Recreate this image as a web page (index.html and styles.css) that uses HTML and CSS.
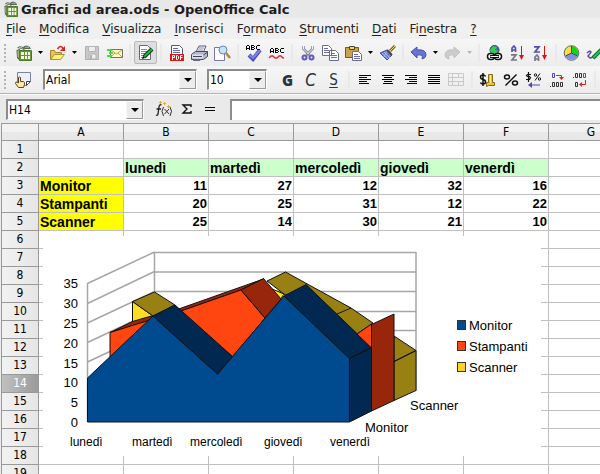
FILE: index.html
```html
<!DOCTYPE html>
<html lang="it">
<head>
<meta charset="utf-8">
<title>Grafici ad area.ods - OpenOffice Calc</title>
<link rel="stylesheet" href="styles.css">
</head>
<body>
<svg class="defs" aria-hidden="true">
  <symbol id="sheet" viewBox="0 0 16 16">
    <path d="M1 3Q3 0 7 2q3-3 7 0l1 2H9L8 5 6 4z" fill="#5d6a64"/>
    <path d="M3 2.500q2-1 4 1M9 2.500q2-1 4 0" fill="none" stroke="#b4beb8"/>
    <path d="M.5 5L4 4v12l-3-3z" fill="#4f6a3c"/>
    <path d="M1.500 6L3 5v8l-1.500-1z" fill="#9db48a"/>
    <path d="M3.500 5.500h12v10h-12z" fill="#62962e" stroke="#4c7a22"/>
    <path d="M5 7h9v7H5z" fill="#f6ffe4"/>
    <path d="M8 7h1v7H8zM11 7h1v7h-1zM5 10h9v1H5z" fill="#62962e"/>
  </symbol>
  <symbol id="drop" viewBox="0 0 5 3"><path d="M0 0h5L2.500 3z" fill="currentColor"/></symbol>
</svg>

<header class="titlebar">
  <svg width="14" height="16" viewBox="0 0 16 16" preserveAspectRatio="none"><use href="#sheet"/></svg>
  <h1>Grafici ad area.ods - OpenOffice Calc</h1>
</header>

<nav class="menubar">
  <button><u>F</u>ile</button><button><u>M</u>odifica</button><button><u>V</u>isualizza</button><button><u>I</u>nserisci</button><button>F<u>o</u>rmato</button><button><u>S</u>trumenti</button><button><u>D</u>ati</button><button>Fi<u>n</u>estra</button><button><u>?</u></button>
</nav>

<div class="toolbar" role="toolbar" aria-label="Standard">
  <span class="grip"></span>
  <button class="tool" aria-label="Nuovo"><svg width="16" height="16"><use href="#sheet"/></svg></button>
  <button class="more" aria-label="Altri documenti"><svg width="5" height="3"><use href="#drop"/></svg></button>
  <button class="tool" aria-label="Apri"><svg width="17" height="16"><path d="M1.500 14.500v-9h4l1 2h6v2" fill="#e8c060" stroke="#a8822a"/><path d="M1.500 14.500l4-5h10l-4 5z" fill="#fff080" stroke="#a89430"/><path d="M8.500 4q3-5 6 0" fill="none" stroke="#e02020" stroke-width="1.500"/><path d="M16 1v5h-5z" fill="#e02020"/></svg></button>
  <button class="more" aria-label="File recenti"><svg width="5" height="3"><use href="#drop"/></svg></button>
  <button class="tool" aria-label="Salva"><svg width="16" height="16"><path d="M1.500 1.500h13v13h-13z" fill="#c8c8c8" stroke="#b0b0b0"/><path d="M4.500 1.500h7v5h-7zM5 9h7v5H5z" fill="#eee" stroke="#b4b4b4"/><path d="M6 10h2v4H6z" fill="#b0b0b0"/></svg></button>
  <button class="tool" aria-label="Invia per posta"><svg width="17" height="16"><path d="M4.500 4.500h12v8h-12z" fill="#fff8c0" stroke="#77745a"/><path d="M5 5l5.500 4L16 5M5 12l4-4M16 12l-4-4" fill="none" stroke="#b0a868"/><path d="M1 4h4v2H1zM3 7h4v2H3zM1 10h5v2H1z" fill="#3fe03f"/></svg></button>
  <span class="sep"></span>
  <button class="tool pressed" aria-label="Modifica file" aria-pressed="true"><svg width="16" height="16"><path d="M1.500.5h8l3 3v11h-11z" fill="#fff" stroke="#667"/><path d="M3 4.500h6M3 6.500h6M3 8.500h4M3 10.500h3M3 12.500h2" stroke="#889"/><path d="M6 12L14 4" stroke="#042" stroke-width="4"/><path d="M6.500 11.500L14 4" stroke="#1fb82c" stroke-width="2"/><path d="M4 14l1-3 2 2z" fill="#000"/></svg></button>
  <span class="sep"></span>
  <button class="tool" aria-label="Esporta PDF"><svg width="16" height="16"><path d="M2.500.5h8l3 3v8h-11z" fill="#fff" stroke="#557"/><path d="M4 3.500h5M4 5.500h7M4 7.500h7" stroke="#66a"/><path d="M1 9h14v7H1z" fill="#e01818"/><path d="M3.500 15v-4.500h2v2h-2M7.500 10.500v4h1l1-1v-2l-1-1zM11.500 15v-4.500h2M11.500 12.500h2" fill="none" stroke="#fff"/></svg></button>
  <button class="tool" aria-label="Stampa"><svg width="17" height="16"><path d="M5 7l3-6h7l-3 7z" fill="#fff" stroke="#557"/><path d="M8 3h5M7 5h5" stroke="#88a"/><path d="M.5 9.500l4-3h12v5l-4 3H.5z" fill="#b4b8c8" stroke="#444a60"/><path d="M1 9.500h11v4H1z" fill="#dde0e8"/><path d="M2 11.500h9M12.500 10l4-3" stroke="#445"/><path d="M3 14h7l-1 2H2z" fill="#668"/></svg></button>
  <button class="tool" aria-label="Anteprima"><svg width="17" height="16"><path d="M.5 2.500h10v13H.5z" fill="#fff" stroke="#77a"/><circle cx="9" cy="5" r="4" fill="#c6e2f8" stroke="#6a86b4"/><path d="M12 8l4 5" stroke="#b08848" stroke-width="2.500"/></svg></button>
  <span class="sep"></span>
  <button class="tool" aria-label="Controllo ortografico"><svg width="17" height="18"><path d="M4 11l4 4 7-9" fill="none" stroke="#4b4bbb" stroke-width="4"/><path d="M4 11l4 3 7-8" fill="none" stroke="#8080ee" stroke-width="2"/><path class="px" d="M1 2h1v4H1zM2 1h2v1H2zM4 2h1v4H4zM2 4h2v1H2zM6 1h3v1H6zM6 3h3v1H6zM6 5h3v1H6zM6 1h1v5H6zM9 2h1v1H9zM9 4h1v1H9zM12 1h3v1h-3zM11 2h1v3h-1zM12 5h3v1h-3z"/></svg></button>
  <button class="tool" aria-label="Controllo automatico"><svg width="17" height="16"><path class="px" d="M2 4h1v4H2zM3 3h2v1H3zM5 4h1v4H5zM3 6h2v1H3zM7 3h3v1H7zM7 5h3v1H7zM7 7h3v1H7zM7 3h1v5H7zM10 4h1v1h-1zM10 6h1v1h-1zM13 3h3v1h-3zM12 4h1v3h-1zM13 7h3v1h-3z"/><path d="M1 13l2-2h2l2 2h2l2-2h2l2 2h1" fill="none" stroke="#e22" stroke-width="1.300"/></svg></button>
  <span class="sep"></span>
  <button class="tool" aria-label="Taglia"><svg width="16" height="16"><path d="M3.500 1v3l6 6M12.500 1v3l-6 6" fill="none" stroke="#84849a" stroke-width="2.500"/><path d="M3.500 1v3l5 5M12.500 1v3l-5 5" fill="none" stroke="#f4f4f8"/><circle cx="4.500" cy="12.500" r="2" fill="none" stroke="#6058c0" stroke-width="2"/><circle cx="11.500" cy="12.500" r="2" fill="none" stroke="#6058c0" stroke-width="2"/></svg></button>
  <button class="tool" aria-label="Copia"><svg width="17" height="16"><path d="M.5.5h6l3 3v7h-9zM7.500 5.500h6l3 3v7h-9z" fill="#fff" stroke="#66708e"/><path d="M2 3.500h4M2 5.500h5M2 7.500h5M9 8.500h4M9 10.500h6M9 12.500h6" stroke="#6a6ab8"/></svg></button>
  <button class="tool" aria-label="Incolla"><svg width="17" height="16"><path d="M.5 2.500h13v10H.5z" fill="#caa24a" stroke="#76561c"/><path d="M4.500 1.500h5v3h-5z" fill="#f4e03c" stroke="#443"/><path d="M7.500 6.500h6l3 3v6h-9z" fill="#fff" stroke="#66708e"/><path d="M9 9.500h4M9 11.500h6M9 13.500h6" stroke="#6a6ab8"/></svg></button>
  <button class="more" aria-label="Incolla speciale"><svg width="5" height="3"><use href="#drop"/></svg></button>
  <button class="tool" aria-label="Pennello"><svg width="17" height="16"><path d="M11 6l5-5" stroke="#7a6228" stroke-width="3"/><path d="M11 6l5-5" stroke="#f0d878"/><path d="M1 8l7-3 5 5-5 5z" fill="#6c7ed8" stroke="#4450a0"/><path d="M3 8l6 6M5 7l6 6M8 6l-3 6" stroke="#a8b4f4"/><path d="M8 5l5 5" stroke="#444" stroke-width="2"/></svg></button>
  <span class="sep"></span>
  <button class="tool" aria-label="Annulla"><svg width="17" height="16"><path d="M1 7l6-5v3q9-1 9 5 0 3-4 4 2-5-5-4v3z" fill="#6474d8" stroke="#4650a8"/></svg></button>
  <button class="more" aria-label="Elenco annulla"><svg width="5" height="3"><use href="#drop"/></svg></button>
  <button class="tool" aria-label="Ripristina" disabled><svg width="17" height="16"><path d="M16 7l-6-5v3q-9-1-9 5 0 3 4 4-2-5 5-4v3z" fill="#ccc" stroke="#c0c0c0"/></svg></button>
  <button class="more" aria-label="Elenco ripristina" disabled><svg width="5" height="3"><use href="#drop"/></svg></button>
  <span class="sep"></span>
  <button class="tool" aria-label="Collegamento"><svg width="17" height="16"><circle cx="8.500" cy="5" r="4.500" fill="#4468c0" stroke="#345"/><path d="M4 5l3-4 4 1-2 3 3 1-2 3-5-1z" fill="#2fd04a"/><rect x="1.500" y="8.500" width="7" height="6" rx="3" fill="#fff" stroke="#111" stroke-width="1.500"/><rect x="8.500" y="8.500" width="7" height="6" rx="3" fill="#fff" stroke="#111" stroke-width="1.500"/><path d="M4 11.500h9" stroke="#111" stroke-width="3"/><path d="M4.500 11.500h8" stroke="#fff"/></svg></button>
  <button class="tool" aria-label="Ordine crescente"><svg width="16" height="16"><path d="M2 7V3l2-2 1.500 2v4M2 5h3.500" fill="none" stroke="#5050b4" stroke-width="1.700"/><path d="M1 9.800h5L2 15h5" fill="none" stroke="#778" stroke-width="1.700"/><path d="M11 1h1v9h-1z" fill="#e01010"/><path d="M9 10h5l-2.500 5z" fill="#e01010"/></svg></button>
  <button class="tool" aria-label="Ordine decrescente"><svg width="16" height="16"><path d="M1 1.800h5L2 7h5" fill="none" stroke="#5050b4" stroke-width="1.700"/><path d="M2 16v-4l2-2 1.500 2v4M2 14h3.500" fill="none" stroke="#778" stroke-width="1.700"/><path d="M11 1h1v9h-1z" fill="#e01010"/><path d="M9 10h5l-2.500 5z" fill="#e01010"/></svg></button>
  <span class="sep"></span>
  <button class="tool" aria-label="Grafico"><svg width="17" height="16"><circle cx="8.500" cy="8" r="7.300" fill="#ffdf38" stroke="#667"/><path d="M8.500 8V1a7 7 0 0 1 6 10z" fill="#0fd818"/><path d="M8.500 8l6 3a7 7 0 0 1-12 0z" fill="#7c90f4"/><path d="M8.500 1v7l6 3M8.500 8l-6 3" fill="none" stroke="#445"/></svg></button>
  <button class="tool" aria-label="Disegno"><svg width="17" height="16"><path d="M1 8q3-3 4-1-1 2-3 4l2 2q2 0 4-2" fill="none" stroke="#6044b0" stroke-width="1.500"/><path d="M7 13l9-9" stroke="#063" stroke-width="4"/><path d="M7.500 12.500l9-9" stroke="#2c3" stroke-width="2"/></svg></button>
</div>

<div class="toolbar" role="toolbar" aria-label="Formattazione">
  <span class="grip"></span>
  <button class="tool" aria-label="Stili"><svg width="17" height="16"><path d="M2.500.5h13v9l-4 4h-9z" fill="#eceff8" stroke="#7c8498"/><path d="M11.500 13.500v-4h4z" fill="#fff" stroke="#445"/><path d="M3.500 5.500q1.500-1 2 0v4h3q1.500 1 1 3l-1 3h-5l-3-4q0-2 1.500-1.500l1.500 1z" fill="#ffe8a8" stroke="#5c4420"/></svg></button>
  <label class="combo font"><select aria-label="Tipo di carattere"><option>Arial</option></select><span class="arrow"><svg width="8" height="4" viewBox="0 0 5 3" preserveAspectRatio="none"><path d="M0 0h5L2.500 3z"/></svg></span></label>
  <label class="combo size"><select aria-label="Dimensione"><option>10</option></select><span class="arrow"><svg width="8" height="4" viewBox="0 0 5 3" preserveAspectRatio="none"><path d="M0 0h5L2.500 3z"/></svg></span></label>
  <button class="tool letter bold">G</button>
  <button class="tool letter italic">C</button>
  <button class="tool letter under">S</button>
  <span class="sep"></span>
  <button class="tool" aria-label="Sinistra"><svg class="px" width="12" height="10"><path d="M0 0h12v1H0zM0 2h8v1H0zM0 4h12v1H0zM0 6h8v1H0zM0 8h10v1H0z"/></svg></button>
  <button class="tool" aria-label="Centrato"><svg class="px" width="12" height="10"><path d="M0 0h12v1H0zM2 2h8v1H2zM0 4h12v1H0zM2 6h8v1H2zM1 8h10v1H1z"/></svg></button>
  <button class="tool" aria-label="Destra"><svg class="px" width="12" height="10"><path d="M0 0h12v1H0zM4 2h8v1H4zM0 4h12v1H0zM4 6h8v1H4zM2 8h10v1H2z"/></svg></button>
  <button class="tool" aria-label="Giustificato"><svg class="px" width="12" height="10"><path d="M0 0h12v1H0zM0 2h12v1H0zM0 4h12v1H0zM0 6h12v1H0zM0 8h12v1H0z"/></svg></button>
  <button class="tool" aria-label="Unisci celle" disabled><svg width="17" height="14"><path d="M.5.5h15v12H.5zM.5 4.500h15M.5 8.500h15M4.500.5v12M10.500.5v4M10.500 8.500v4" fill="none" stroke="#c8c8c8"/></svg></button>
  <span class="sep"></span>
  <button class="tool" aria-label="Valuta"><svg width="17" height="16"><path d="M6.500 4.500Q6 3 4 3 1.500 3 1.500 5T4 7.500t2.500 2.500T4 12q-2 0-2.500-1.500M4 1v13" fill="none" stroke="#111" stroke-width="1.500"/><path d="M9.500 2.500h4v8h2v3h-6l-2 1v-4h2z" fill="#f0c030" stroke="#8a6a18"/><path d="M11.500 3v8" stroke="#fff080"/></svg></button>
  <button class="tool" aria-label="Percentuale"><svg width="16" height="14"><ellipse cx="4" cy="4" rx="2.500" ry="2" fill="none" stroke="#111" stroke-width="1.500"/><ellipse cx="12" cy="10" rx="2.500" ry="2" fill="none" stroke="#111" stroke-width="1.500"/><path d="M2.500 12.500l11-11" stroke="#111" stroke-width="1.500"/></svg></button>
  <button class="tool" aria-label="Formato standard"><svg width="17" height="16"><path d="M6 2.500H2.500L1.500 3.500 2.500 4.500h2l1 1-1 2H1M3.500 0v10" fill="none" stroke="#111" stroke-width="1.200"/><circle cx="10.500" cy="3" r="1.200" fill="none" stroke="#111"/><circle cx="14.500" cy="7" r="1.200" fill="none" stroke="#111"/><path d="M10 8.500l5-7" stroke="#111"/><path d="M5 13h10" stroke="#5048c0"/><path d="M3 13l4-3v6z" fill="#5048c0"/></svg></button>
  <button class="tool" aria-label="Aggiungi decimale"><svg width="16" height="16"><path d="M3.500 1.500h2v4h-2z" fill="none" stroke="#5048c0"/><path d="M7 3.500h5.500v3" fill="none" stroke="#d22"/><path d="M10 5h5l-2.500 3z" fill="#d22"/><path d="M3.500 10.500h2v4h-2zM7.500 10.500h2v4h-2zM11.500 10.500h2v4h-2zM1 14.500h1" fill="none" stroke="#333"/></svg></button>
  <button class="tool" aria-label="Elimina decimale"><svg width="16" height="16"><path d="M3.500 1.500h2v4h-2zM7.500 1.500h2v4h-2zM1 5.500h1" fill="none" stroke="#333"/><path d="M11.500 1.500h2v4h-2z" fill="none" stroke="#5048c0"/><path d="M3.500 10.500h2v4h-2z" fill="none" stroke="#333"/><path d="M13.500 8v4.500H9" fill="none" stroke="#d22"/><path d="M7 12.500l3-2.500v5z" fill="#d22"/></svg></button>
  <span class="sep"></span>
</div>

<div class="formulabar">
  <div class="combo name"><input type="text" value="H14" aria-label="Casella del nome"><button class="arrow" aria-label="Elenco nomi"><svg width="8" height="4" viewBox="0 0 5 3" preserveAspectRatio="none"><path d="M0 0h5L2.500 3z"/></svg></button></div>
  <button class="tool" aria-label="Creazione guidata funzione"><svg width="18" height="18"><path d="M6.500 5Q4.500 4 4 7L3 14q-.5 2-2 1M1.500 9h4.500" fill="none" stroke="#222" stroke-width="1.300"/><path d="M8.500 7q-3 4 0 9M15 7q3 4 0 9M9.500 9l4.500 5M14 9l-4.500 5" fill="none" stroke="#333"/><path d="M4 2h3v1H4zM5 1h1v3H5zM8 3h3v1H8zM9 2h1v3H9zM12 6h3v1h-3zM13 5h1v3h-1z" fill="#f5a81c"/></svg></button>
  <button class="tool" aria-label="Somma"><svg width="12" height="12"><path d="M10 4V2H2l4 4-4 4h8V8" fill="none" stroke="#111" stroke-width="1.400"/></svg></button>
  <button class="tool" aria-label="Funzione"><svg class="px" width="10" height="6"><path d="M0 1h10v1H0zM0 4h10v1H0z"/></svg></button>
  <input class="formula" type="text" aria-label="Riga di immissione">
</div>

<main class="sheet">
  <table>
    <colgroup><col class="rowhead"><col><col><col><col><col><col><col></colgroup>
    <thead><tr><th></th><th>A</th><th>B</th><th>C</th><th>D</th><th>E</th><th>F</th><th>G</th></tr></thead>
    <tbody>
      <tr><th>1</th><td></td><td></td><td></td><td></td><td></td><td></td><td></td></tr>
      <tr><th>2</th><td></td><td class="day">lunedì</td><td class="day">martedì</td><td class="day">mercoledì</td><td class="day">giovedì</td><td class="day">venerdì</td><td></td></tr>
      <tr><th>3</th><td class="item">Monitor</td><td>11</td><td>27</td><td>12</td><td>32</td><td>16</td><td></td></tr>
      <tr><th>4</th><td class="item">Stampanti</td><td>20</td><td>25</td><td>31</td><td>12</td><td>22</td><td></td></tr>
      <tr><th>5</th><td class="item">Scanner</td><td>25</td><td>14</td><td>30</td><td>21</td><td>10</td><td></td></tr>
      <tr><th>6</th><td></td><td></td><td></td><td></td><td></td><td></td><td></td></tr>
      <tr><th>7</th><td></td><td></td><td></td><td></td><td></td><td></td><td></td></tr>
      <tr><th>8</th><td></td><td></td><td></td><td></td><td></td><td></td><td></td></tr>
      <tr><th>9</th><td></td><td></td><td></td><td></td><td></td><td></td><td></td></tr>
      <tr><th>10</th><td></td><td></td><td></td><td></td><td></td><td></td><td></td></tr>
      <tr><th>11</th><td></td><td></td><td></td><td></td><td></td><td></td><td></td></tr>
      <tr><th>12</th><td></td><td></td><td></td><td></td><td></td><td></td><td></td></tr>
      <tr><th>13</th><td></td><td></td><td></td><td></td><td></td><td></td><td></td></tr>
      <tr><th class="current">14</th><td></td><td></td><td></td><td></td><td></td><td></td><td></td></tr>
      <tr><th>15</th><td></td><td></td><td></td><td></td><td></td><td></td><td></td></tr>
      <tr><th>16</th><td></td><td></td><td></td><td></td><td></td><td></td><td></td></tr>
      <tr><th>17</th><td></td><td></td><td></td><td></td><td></td><td></td><td></td></tr>
      <tr><th>18</th><td></td><td></td><td></td><td></td><td></td><td></td><td></td></tr>
      <tr><th>19</th><td></td><td></td><td></td><td></td><td></td><td></td><td></td></tr>
    </tbody>
  </table>
  <svg class="chart" width="498" height="220" viewBox="43 236 498 220" role="img" aria-label="Grafico ad area 3D">
    <g class="walls">
      <path d="M87.500 283.500l67-31.500M87.500 303.500l67-32M87.500 323l67-31.500M87.500 342.500l67-31.500M87.500 362l67-31.500M87.500 283v139"/>
      <path d="M154.500 252.500H416M154.500 272H416M154.500 291.500H416M154.500 311.500H416M154.500 330.500H416M154.500 252v80M416 252v139"/>
    </g>
    <g class="solids">
      <path class="olive" d="M284 294L267 281l18.500-9L351 308l22 15-16 11z"/>
      <path class="olive" d="M351 308l-14 6"/>
      <path class="olive" d="M394 336l22 14.500-22 11zM394 361.500l22-11V390.500l-22 10z"/>
      <path class="yellow" d="M272 289l12 5-4 6z"/>
      <path class="yellow" d="M132.500 301.500L153 316l-20.500 7z"/>
      <path class="red" d="M110 332.500l22.500-11L153 315.500l27-7 83.500-29.500-22.500 11-60 21-36 11z"/>
      <path class="orange" d="M110 332.500l35-11 36-10.500 60-21 24 28-32 39-58-46-65 50z"/>
      <path class="red" d="M241 290l22.500-11.500L281 299l-16 19z"/>
      <path class="olive" d="M132.500 301.500L154.500 292l20.500 13-22 11z"/>
      <path class="blue" d="M87.500 378L153 316l64.500 58L284 296l65.500 62.500V422h-262z"/>
      <path class="navy" d="M153 316l22-11 57.500 51.500-15 17.500zM284 296l22-11.500 65.500 63-22 11zM349.500 358.500l22-11V411l-22 11z"/>
      <path class="orange" d="M357 334l14.500-10v24z"/>
      <path class="red" d="M371.500 324.500l22.500-10.500V400.500L371.500 411z"/>
    </g>
    <g class="key">
      <rect class="blue" x="457.500" y="320.500" width="8" height="9"/>
      <rect class="orange" x="457.500" y="341.500" width="8" height="9"/>
      <rect class="bright" x="457.500" y="362.500" width="8" height="9"/>
    </g>
    <g class="scale">
      <text x="78" y="288">35</text><text x="78" y="308">30</text><text x="78" y="328">25</text><text x="78" y="348">20</text><text x="78" y="368">15</text><text x="78" y="387">10</text><text x="78" y="407">5</text><text x="78" y="427">0</text>
    </g>
    <g class="days">
      <text x="70" y="446">lunedì</text><text x="132" y="446">martedì</text><text x="190" y="446">mercoledì</text><text x="264" y="446">giovedì</text><text x="330" y="446">venerdì</text>
    </g>
    <g class="names">
      <text x="365" y="432">Monitor</text><text x="410" y="410">Scanner</text>
      <text x="469" y="330">Monitor</text><text x="469" y="351">Stampanti</text><text x="469" y="372">Scanner</text>
    </g>
  </svg>
</main>
</body>
</html>
```
FILE: styles.css
```css
* { box-sizing: border-box; }

body {
  display: flex;
  flex-direction: column;
  height: 100vh;
  margin: 0;
  overflow: hidden;
  background: #ececec;
  color: #000;
  font: 12px "DejaVu Sans Condensed", "DejaVu Sans", sans-serif;
}

button, input, select {
  margin: 0;
  padding: 0;
  border: 0;
  background: none;
  color: inherit;
  font: inherit;
}

svg { display: block; flex: none; }
.px { shape-rendering: crispEdges; }
.defs { position: absolute; width: 0; height: 0; }

.titlebar {
  display: flex;
  align-items: center;
  flex: none;
  gap: 3px;
  height: 18px;
  padding-left: 4px;
  background: #e8e8e8;
}
.titlebar h1 {
  margin: 0;
  font: bold 13px "DejaVu Sans", sans-serif;
  color: #1c1c1c;
  white-space: nowrap;
}

.menubar {
  display: flex;
  align-items: center;
  flex: none;
  gap: 13px;
  height: 21px;
  padding-left: 6px;
  background: #f0f0f0;
  font: 12px "DejaVu Sans", sans-serif;
  color: #222;
}
.menubar u { text-underline-offset: 2px; }

.toolbar {
  display: flex;
  align-items: center;
  flex: none;
  height: 27px;
  padding-left: 4px;
  background: linear-gradient(#f6f6f6, #ececec);
}
.toolbar + .toolbar {
  height: 28px;
  border-bottom: 1px solid #b4b4b4;
}
.grip {
  flex: none;
  width: 2px;
  height: 18px;
  margin-right: 6px;
  background: repeating-linear-gradient(#b4b4b4 0 2px, transparent 2px 4px);
}
.tool, .more {
  display: flex;
  align-items: center;
  justify-content: center;
  flex: none;
  width: 23px;
  height: 23px;
}
.more { width: 11px; }
.more:disabled { color: #b8b8b8; }
.pressed {
  border: 1px solid #b8b8b8;
  border-radius: 2px;
  background: #dedede;
}
.sep {
  flex: none;
  width: 2px;
  height: 18px;
  margin: 0 3px;
  background: #e9e9e9;
}

.letter { font-size: 15px; color: #2a3340; }
.bold { font-family: "Open Sans", sans-serif; font-weight: 800; }
.italic { font-size: 17px; font-style: italic; }
.under { text-decoration: underline; text-underline-offset: 2px; }

.combo {
  display: flex;
  flex: none;
  height: 21px;
  border: 1px solid #fff;
  border-top: 2px solid #8c8c8c;
  border-left: 2px solid #8c8c8c;
  background: #fff;
}
.combo select, .combo input {
  appearance: none;
  flex: 1;
  min-width: 0;
  padding-left: 1px;
  outline: 0;
}
.arrow {
  display: flex;
  align-items: center;
  justify-content: center;
  flex: none;
  width: 17px;
  border: 1px solid #f8f8f8;
  border-right-color: #999;
  border-bottom-color: #999;
  background: #ececec;
  pointer-events: none;
}
.font { width: 154px; margin-left: 8px; }
.size { width: 60px; margin: 0 9px 0 10px; }
.name { width: 138px; margin-right: 8px; }

.formulabar {
  display: flex;
  align-items: center;
  flex: none;
  height: 29px;
  padding-left: 6px;
  border-top: 1px solid #fafafa;
  background: #eaeaea;
}
.formula {
  flex: 1;
  min-width: 0;
  height: 21px;
  margin-left: 9px;
  padding-left: 4px;
  border-top: 2px solid #8c8c8c;
  border-left: 2px solid #8c8c8c;
  background: #fff;
}

.sheet {
  position: relative;
  flex: 1;
  min-height: 0;
  margin-left: 1px;
  border-top: 1px solid #999;
  border-left: 1px solid #999;
  overflow: hidden;
  background: #fff;
}
table {
  width: 632px;
  table-layout: fixed;
  border-collapse: separate;
  border-spacing: 0;
}
col { width: 85px; }
.rowhead { width: 37px; }
th, td {
  height: 18px;
  padding: 0 1px;
  border-right: 1px solid #c0c0c0;
  border-bottom: 1px solid #c0c0c0;
  line-height: 17px;
  white-space: nowrap;
}
th {
  border-color: #999;
  background: linear-gradient(90deg, #f2f2f2, #e6e6e6);
  font-weight: normal;
}
thead th {
  height: 17px;
  line-height: 16px;
  background: linear-gradient(#f2f2f2 50%, #e8e8e8 50%);
}
td {
  font: bold 13px "Liberation Sans", sans-serif;
  text-align: right;
}
.day, .item { font-size: 14px; text-align: left; }
.day { background: #cfc; }
.item { background: #ff0; }
.current {
  background: linear-gradient(90deg, #c0c0c0, #9a9a9a);
  color: #fff;
}

.chart {
  position: absolute;
  top: 112px;
  left: 41px;
  background: #fff;
  font: 12px "Liberation Sans", sans-serif;
}
.walls { fill: none; stroke: #a6a6a6; stroke-width: 1.5px; }
.solids { stroke: #111; stroke-width: 1px; stroke-linejoin: round; }
.key { stroke: #333; }
.scale { text-anchor: end; }
.scale, .names { font-size: 13px; }
.blue { fill: #004a8f; }
.navy { fill: #002850; }
.orange { fill: #ff4510; }
.red { fill: #97260a; }
.yellow { fill: #ffdf20; }
.bright { fill: #ffd320; }
.olive { fill: #998013; }
```
